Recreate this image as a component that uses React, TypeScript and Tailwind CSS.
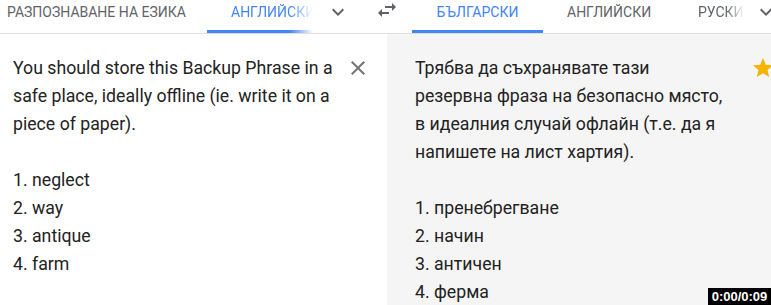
import React from "react";

const tabText = "text-[14px] leading-[16px] uppercase";

function Chevron({ className = "" }: { className?: string }) {
  return (
    <svg viewBox="0 0 24 24" className={`h-6 w-6 shrink-0 fill-[#5f6368] ${className}`}>
      <path d="M16.59 8.59L12 13.17 7.41 8.59 6 10l6 6 6-6z" />
    </svg>
  );
}

export default function App() {
  const left = ["1. neglect", "2. way", "3. antique", "4. farm"];
  const right = ["1. пренебрегване", "2. начин", "3. античен", "4. ферма"];

  return (
    <div className="relative h-[305px] w-[771px] overflow-hidden bg-white font-['Roboto',sans-serif] text-[#222]">
      {/* Language bar */}
      <div className="flex h-[34px] items-start border-b border-[#e0e0e0] text-[#5f6368]">
        <div className={`w-[207px] shrink-0 pl-[7px] pt-[4px] ${tabText}`}>Разпознаване на езика</div>
        <div className="flex h-[33px] w-[106px] shrink-0 flex-col justify-between overflow-hidden [mask-image:linear-gradient(to_right,black_78%,transparent)]">
          <div className={`whitespace-nowrap pl-[24px] pt-[4px] text-[#4285f4] ${tabText}`}>Английски</div>
          <div className="h-[3px] bg-[#4285f4]" />
        </div>
        <Chevron className="ml-[13px]" />
        <svg viewBox="0 0 24 24" className="-mt-[2px] ml-[25px] h-6 w-6 shrink-0 fill-[#5f6368]">
          <path d="M6.99 11L3 15l3.99 4v-3H14v-2H6.99v-3zM21 9l-3.99-4v3H10v2h7.01v3L21 9z" />
        </svg>
        <div className="ml-[13px] flex h-[33px] w-[131px] shrink-0 flex-col justify-between">
          <div className={`pt-[4px] text-center text-[#4285f4] ${tabText}`}>Български</div>
          <div className="h-[3px] bg-[#4285f4]" />
        </div>
        <div className={`w-[131px] shrink-0 pl-[24px] pt-[4px] ${tabText}`}>Английски</div>
        <div className={`w-[74px] shrink-0 overflow-hidden whitespace-nowrap pl-[24px] pt-[4px] [mask-image:linear-gradient(to_right,black_70%,transparent_95%)] ${tabText}`}>
          Руски
        </div>
        <Chevron className="ml-[6px]" />
      </div>

      {/* Panels */}
      <div className="flex h-[271px]">
        <div className="flex w-[387px] shrink-0 items-start pl-[13px] pt-[20px]">
          <div className="w-[330px] text-[17.7px] leading-[28px]">
            <p className="mb-[28px]">
              You should store this Backup Phrase in a safe place, ideally offline (ie. write it on a piece of paper).
            </p>
            {left.map((w) => (
              <div key={w}>{w}</div>
            ))}
          </div>
          <svg viewBox="0 0 24 24" className="ml-[3px] mt-[2px] h-6 w-6 shrink-0 fill-[#757575]">
            <path d="M19 6.41L17.59 5 12 10.59 6.41 5 5 6.41 10.59 12 5 17.59 6.41 19 12 13.41 17.59 19 19 17.59 13.41 12z" />
          </svg>
        </div>
        <div className="flex flex-1 items-start bg-[#f5f5f5] pl-[28px] pt-[20px]">
          <div className="w-[316px] text-[17.7px] leading-[28px]">
            <p className="mb-[28px]">
              Трябва да съхранявате тази резервна фраза на безопасно място, в идеалния случай офлайн (т.е. да я напишете на лист хартия).
            </p>
            {right.map((w) => (
              <div key={w}>{w}</div>
            ))}
          </div>
          <svg viewBox="0 0 24 24" className="ml-[20px] mt-[2px] h-6 w-6 shrink-0 fill-[#f4b400]">
            <path d="M12 17.27L18.18 21l-1.64-7.03L22 9.24l-7.19-.61L12 2 9.19 8.63 2 9.24l5.46 4.73L5.82 21z" />
          </svg>
        </div>
      </div>

      {/* Video time overlay */}
      <div className="absolute bottom-0 right-0 flex h-[17px] w-[63px] items-center justify-center bg-black font-['Liberation_Sans',sans-serif] text-[13px] font-bold leading-none text-white">
        0:00/0:09
      </div>
    </div>
  );
}
